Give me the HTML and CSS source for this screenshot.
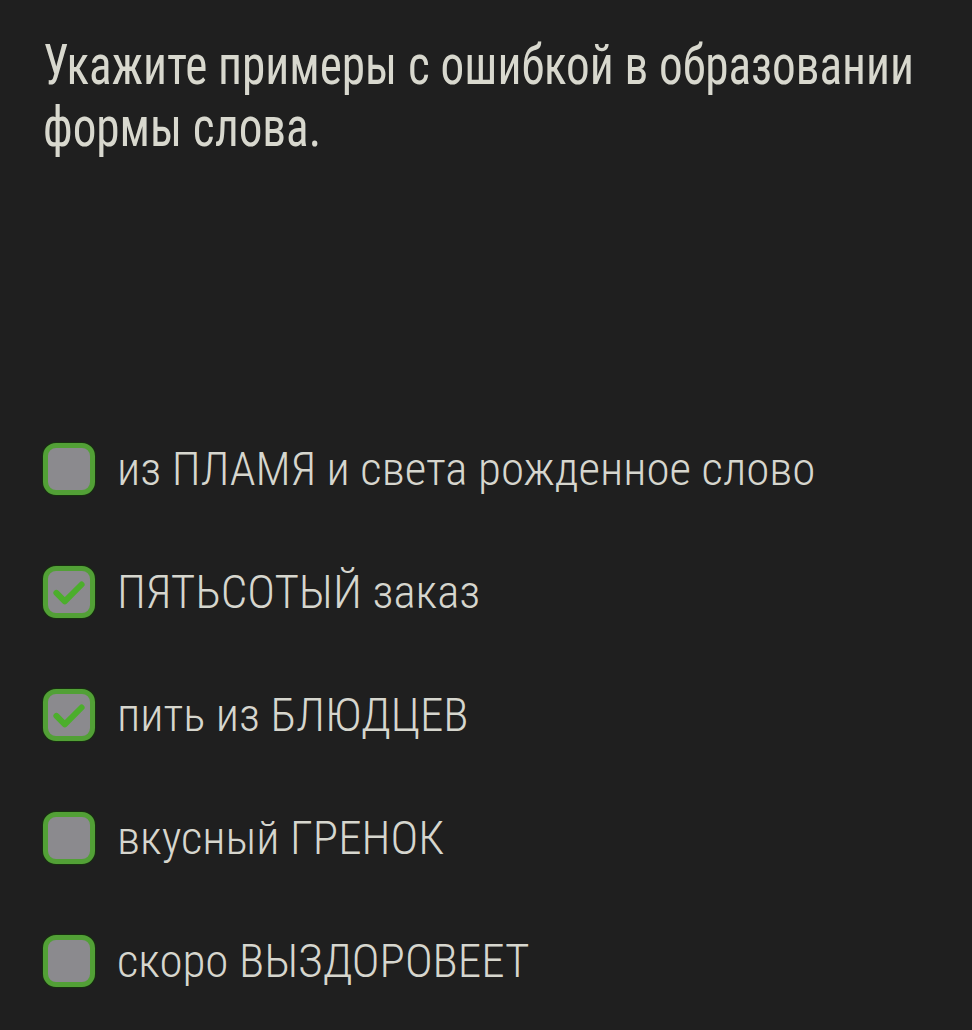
FILE: index.html
```html
<!DOCTYPE html>
<html lang="ru"><head><meta charset="utf-8"><link rel="stylesheet" href="styles.css"></head>
<body>
<main class="quiz">
  <h1 class="question">Укажите примеры с ошибкой в образовании формы слова.</h1>
  <ul class="options">
    <li class="option"><span class="box"></span><span class="label">из ПЛАМЯ и света рожденное слово</span></li>
    <li class="option checked"><span class="box"><svg viewBox="0 0 24 24" class="tick"><path d="M3.6 12.6l5.6 5.6L20.4 7"/></svg></span><span class="label">ПЯТЬСОТЫЙ заказ</span></li>
    <li class="option checked"><span class="box"><svg viewBox="0 0 24 24" class="tick"><path d="M3.6 12.6l5.6 5.6L20.4 7"/></svg></span><span class="label">пить из БЛЮДЦЕВ</span></li>
    <li class="option"><span class="box"></span><span class="label">вкусный ГРЕНОК</span></li>
    <li class="option"><span class="box"></span><span class="label">скоро ВЫЗДОРОВЕЕТ</span></li>
  </ul>
</main>
</body></html>
```
FILE: styles.css
```css
html,body{margin:0;padding:0;background:#1f1f1f;overflow:hidden}
.quiz{padding:34px 0 0 43px;font-family:"Roboto Condensed",Roboto,sans-serif;font-stretch:condensed}
.question{margin:0;font-size:55px;line-height:62px;font-weight:400;color:#d8d8ce;width:1060px;transform:scaleX(0.857);transform-origin:0 0}
.options{list-style:none;margin:249px 0 0 0;padding:0;display:flex;flex-direction:column}
.option{height:123px;display:flex;align-items:center;gap:22px}
.box{box-sizing:border-box;width:52px;height:52px;border-radius:13px;background:#8b8a8e;border:5px solid #52a036;box-shadow:0 0 0 1px #173010;display:flex;align-items:center;justify-content:center;flex:none}
.tick{width:36px;height:36px;fill:none;stroke:#4cae2c;stroke-width:4;stroke-linecap:round;stroke-linejoin:round}
.label{font-size:47px;font-weight:300;color:#d6d6ce;white-space:nowrap}
```
